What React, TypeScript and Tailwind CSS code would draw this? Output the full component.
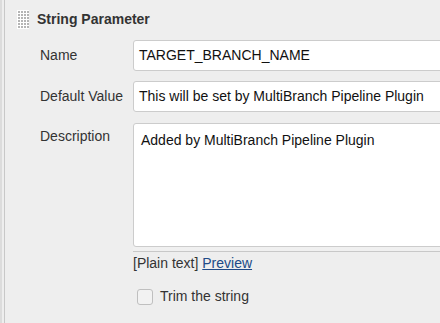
import React from "react";

function Dragger() {
  const dots: JSX.Element[] = [];
  for (let r = 0; r < 6; r++) {
    for (let c = 0; c < 4; c++) {
      dots.push(<rect key={`${r}-${c}`} x={1 + c * 3} y={1 + r * 3} width={2} height={2} fill="#b5b5b5" />);
    }
  }
  return (
    <svg width="12" height="19" viewBox="0 0 12 19" className="shrink-0">
      <rect width="12" height="19" fill="#fff" />
      {dots}
    </svg>
  );
}

function Row({ label, children, top }: { label: string; children: React.ReactNode; top?: boolean }) {
  return (
    <div className={`flex ${top ? "items-start" : "items-center"}`}>
      <div className={`w-[93px] shrink-0 text-[14px] text-[#333] ${top ? "pt-[3px]" : ""}`}>{label}</div>
      {children}
    </div>
  );
}

export default function App() {
  return (
    <div className="flex h-[323px] w-[440px] overflow-hidden bg-[#eeeeee] font-['Liberation_Sans',Arial,sans-serif]">
      <div className="w-[2px] shrink-0 bg-[#dcdcdc]" />
      <div className="w-[2px] shrink-0" />
      <div className="w-[1px] shrink-0 bg-[#c8c8c8]" />
      <div className="flex min-w-[560px] flex-col">
        <div className="flex items-center gap-[8px] pl-[12px] pt-[9px]">
          <Dragger />
          <span className="text-[14px] font-bold text-[#333]">String Parameter</span>
        </div>
        <div className="mt-[10px] flex flex-col pl-[35px]">
          <Row label="Name">
            <div className="flex h-[31px] flex-1 items-center rounded-[3px] border border-[#cccccc] bg-white px-[5px] text-[14px] text-[#111]">
              TARGET_BRANCH_NAME
            </div>
          </Row>
          <div className="h-[10px]" />
          <Row label="Default Value">
            <div className="flex h-[31px] flex-1 items-center rounded-[3px] border border-[#cccccc] bg-white px-[5px] text-[14px] text-[#111]">
              This will be set by MultiBranch Pipeline Plugin
            </div>
          </Row>
          <div className="h-[11px]" />
          <Row label="Description" top>
            <div className="flex flex-1 flex-col">
              <div className="h-[124px] rounded-[3px] border border-[#cccccc] bg-white px-[7px] pt-[6px] text-[14px] text-[#111]">
                Added by MultiBranch Pipeline Plugin
              </div>
              <div className="h-[5px] border-b border-[#c8c8c8] bg-[#f0f0f0]" />
              <div className="mt-[1px] text-[14px] text-[#333]">
                [Plain text]{" "}
                <a href="#" className="text-[#204a87] underline">
                  Preview
                </a>
              </div>
              <label className="mt-[12px] flex items-center gap-[7px] pl-[4px] text-[14px] text-[#333]">
                <span className="h-[16px] w-[16px] rounded-[3px] border border-[#bfbfbf] bg-[#f2f2f2]" />
                Trim the string
              </label>
            </div>
          </Row>
        </div>
      </div>
    </div>
  );
}
